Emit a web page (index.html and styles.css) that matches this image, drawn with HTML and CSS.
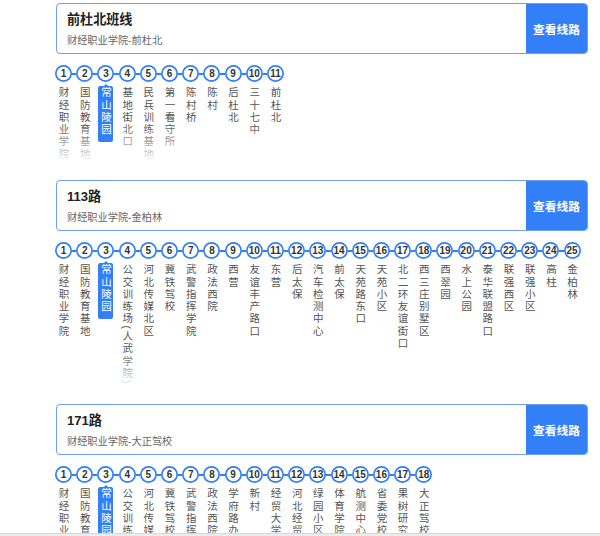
FILE: index.html
```html
<!DOCTYPE html>
<html lang="zh-CN">
<head>
<meta charset="utf-8">
<title>线路</title>
<link rel="stylesheet" href="styles.css">
</head>
<body>
<main class="page">
  <section class="route">
    <div class="card">
      <div class="info"><h2 class="title">前杜北班线</h2><p class="sub">财经职业学院-前杜北</p></div>
      <a class="btn">查看线路</a>
    </div>
    <ol class="stops">
      <li class="stop"><b class="num">1</b><span class="name">财经职业学院</span></li>
      <li class="stop"><b class="num">2</b><span class="name">国防教育基地</span></li>
      <li class="stop here"><b class="num">3</b><span class="name">常山陵园</span></li>
      <li class="stop"><b class="num">4</b><span class="name">基地街北口</span></li>
      <li class="stop"><b class="num">5</b><span class="name">民兵训练基地</span></li>
      <li class="stop"><b class="num">6</b><span class="name">第一看守所</span></li>
      <li class="stop"><b class="num">7</b><span class="name">陈村桥</span></li>
      <li class="stop"><b class="num">8</b><span class="name">陈村</span></li>
      <li class="stop"><b class="num">9</b><span class="name">后杜北</span></li>
      <li class="stop"><b class="num">10</b><span class="name">三十七中</span></li>
      <li class="stop"><b class="num">11</b><span class="name">前杜北</span></li>
    </ol>
  </section>
  <section class="route">
    <div class="card">
      <div class="info"><h2 class="title">113路</h2><p class="sub">财经职业学院-金柏林</p></div>
      <a class="btn">查看线路</a>
    </div>
    <ol class="stops">
      <li class="stop"><b class="num">1</b><span class="name">财经职业学院</span></li>
      <li class="stop"><b class="num">2</b><span class="name">国防教育基地</span></li>
      <li class="stop here"><b class="num">3</b><span class="name">常山陵园</span></li>
      <li class="stop"><b class="num">4</b><span class="name">公交训练场(人武学院)</span></li>
      <li class="stop"><b class="num">5</b><span class="name">河北传媒北区</span></li>
      <li class="stop"><b class="num">6</b><span class="name">冀铁驾校</span></li>
      <li class="stop"><b class="num">7</b><span class="name">武警指挥学院</span></li>
      <li class="stop"><b class="num">8</b><span class="name">政法西院</span></li>
      <li class="stop"><b class="num">9</b><span class="name">西营</span></li>
      <li class="stop"><b class="num">10</b><span class="name">友谊丰产路口</span></li>
      <li class="stop"><b class="num">11</b><span class="name">东营</span></li>
      <li class="stop"><b class="num">12</b><span class="name">后太保</span></li>
      <li class="stop"><b class="num">13</b><span class="name">汽车检测中心</span></li>
      <li class="stop"><b class="num">14</b><span class="name">前太保</span></li>
      <li class="stop"><b class="num">15</b><span class="name">天苑路东口</span></li>
      <li class="stop"><b class="num">16</b><span class="name">天苑小区</span></li>
      <li class="stop"><b class="num">17</b><span class="name">北二环友谊街口</span></li>
      <li class="stop"><b class="num">18</b><span class="name">西三庄别墅区</span></li>
      <li class="stop"><b class="num">19</b><span class="name">西翠园</span></li>
      <li class="stop"><b class="num">20</b><span class="name">水上公园</span></li>
      <li class="stop"><b class="num">21</b><span class="name">泰华联盟路口</span></li>
      <li class="stop"><b class="num">22</b><span class="name">联强西区</span></li>
      <li class="stop"><b class="num">23</b><span class="name">联强小区</span></li>
      <li class="stop"><b class="num">24</b><span class="name">高柱</span></li>
      <li class="stop"><b class="num">25</b><span class="name">金柏林</span></li>
    </ol>
  </section>
  <section class="route">
    <div class="card">
      <div class="info"><h2 class="title">171路</h2><p class="sub">财经职业学院-大正驾校</p></div>
      <a class="btn">查看线路</a>
    </div>
    <ol class="stops">
      <li class="stop"><b class="num">1</b><span class="name">财经职业学院</span></li>
      <li class="stop"><b class="num">2</b><span class="name">国防教育基地</span></li>
      <li class="stop here"><b class="num">3</b><span class="name">常山陵园</span></li>
      <li class="stop"><b class="num">4</b><span class="name">公交训练场</span></li>
      <li class="stop"><b class="num">5</b><span class="name">河北传媒北区</span></li>
      <li class="stop"><b class="num">6</b><span class="name">冀铁驾校</span></li>
      <li class="stop"><b class="num">7</b><span class="name">武警指挥学院</span></li>
      <li class="stop"><b class="num">8</b><span class="name">政法西院</span></li>
      <li class="stop"><b class="num">9</b><span class="name">学府路办</span></li>
      <li class="stop"><b class="num">10</b><span class="name">新村</span></li>
      <li class="stop"><b class="num">11</b><span class="name">经贸大学</span></li>
      <li class="stop"><b class="num">12</b><span class="name">河北经贸</span></li>
      <li class="stop"><b class="num">13</b><span class="name">绿园小区</span></li>
      <li class="stop"><b class="num">14</b><span class="name">体育学院</span></li>
      <li class="stop"><b class="num">15</b><span class="name">航测中心</span></li>
      <li class="stop"><b class="num">16</b><span class="name">省委党校</span></li>
      <li class="stop"><b class="num">17</b><span class="name">果树研究所</span></li>
      <li class="stop"><b class="num">18</b><span class="name">大正驾校</span></li>
    </ol>
  </section>
</main>
<div class="edge"></div>
</body>
</html>
```
FILE: styles.css
```css
* { box-sizing: border-box; }
html, body { margin: 0; height: 536px; overflow: hidden; background: #fff; }
body { font-family: "Liberation Sans", "Noto Sans CJK SC", sans-serif; color: #333; }
.page { padding: 3px 12px 0 56px; }
.route { margin-bottom: 19.7px; }

.card {
  display: flex;
  height: 51px;
  border: 1px solid #6f9ff5;
  border-radius: 4px;
  overflow: hidden;
}
.info { flex: 1; padding: 8px 10px 0; }
.title { margin: 0; font-size: 13.1px; line-height: 16px; font-weight: 700; color: #222; }
.sub { margin: 6px 0 0; font-size: 10.2px; line-height: 14px; color: #666; }
.btn {
  display: flex;
  width: 61px;
  padding-bottom: 1px;
  align-items: center;
  justify-content: center;
  background: #337ff8;
  color: #fff;
  font-size: 11.7px;
  font-weight: 700;
}

.stops {
  position: relative;
  display: flex;
  margin: 11px 0 0 -3px;
  padding: 0;
  list-style: none;
}
.stops::after {
  content: "";
  position: absolute;
  left: 0;
  right: 0;
  bottom: 0;
  height: 36px;
  background: linear-gradient(to bottom, rgba(255,255,255,0), rgba(255,255,255,.88));
  pointer-events: none;
}
.stop {
  position: relative;
  display: flex;
  flex: 0 0 21.2px;
  flex-direction: column;
  align-items: center;
}
.stop:not(:last-child)::before {
  content: "";
  position: absolute;
  left: 50%;
  top: 7.5px;
  width: 21.2px;
  height: 2px;
  background: #337ff8;
}
.num {
  position: relative;
  display: flex;
  width: 17px;
  height: 17px;
  align-items: center;
  justify-content: center;
  border-radius: 50%;
  background: #fff;
  box-shadow: inset 0 0 0 1.7px #337ff8;
  color: #333;
  font-size: 10px;
  font-weight: 700;
  line-height: 1;
}
.name {
  display: flex;
  width: 15px;
  margin-top: 3.5px;
  padding: 1px 1px 0 0;
  justify-content: flex-start;
  align-items: center;
  writing-mode: vertical-lr;
  font-size: 10.5px;
  letter-spacing: 1.8px;
  line-height: 15px;
  color: #555;
}
.here .name {
  position: relative;
  z-index: 1;
  padding-bottom: 6px;
  border-radius: 2px;
  background: #337ff8;
  color: #fff;
}
.here .name::before {
  content: "";
  position: absolute;
  top: -2px;
  left: 50%;
  margin-left: -2px;
  width: 0;
  height: 0;
  border-left: 2px solid transparent;
  border-right: 2px solid transparent;
  border-bottom: 2px solid #337ff8;
}
.edge {
  position: fixed;
  left: 0;
  right: 0;
  bottom: 0;
  height: 3px;
  background: #ececec;
  border-top: 1px solid #d8d8d8;
  z-index: 5;
}
```
